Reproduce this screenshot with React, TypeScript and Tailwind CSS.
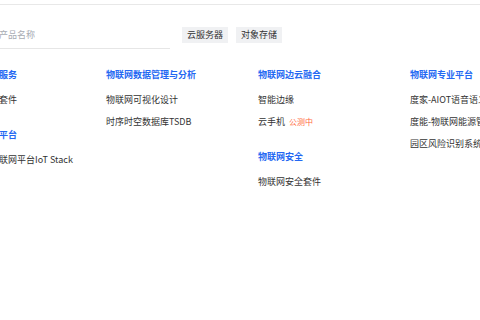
type Item = { label: string; tag?: string };
type Group = { title: string; items: Item[] };

const columns: Group[][] = [
  [
    { title: "物联网核心服务", items: [{ label: "物联网核心套件" }] },
    { title: "物联网基础平台", items: [{ label: "百度天工物联网平台IoT Stack" }] },
  ],
  [
    {
      title: "物联网数据管理与分析",
      items: [{ label: "物联网可视化设计" }, { label: "时序时空数据库TSDB" }],
    },
  ],
  [
    {
      title: "物联网边云融合",
      items: [{ label: "智能边缘" }, { label: "云手机", tag: "公测中" }],
    },
    { title: "物联网安全", items: [{ label: "物联网安全套件" }] },
  ],
  [
    {
      title: "物联网专业平台",
      items: [
        { label: "度家-AIOT语音语义平台" },
        { label: "度能-物联网能源管理" },
        { label: "园区风险识别系统" },
      ],
    },
  ],
];

const tags = ["云服务器", "对象存储"];

function ProductGroup({ group }: { group: Group }) {
  return (
    <div className="flex flex-col">
      <div className="mb-[9px] whitespace-nowrap text-[9px] font-semibold leading-[16px] text-[#2468f2]">
        {group.title}
      </div>
      {group.items.map((item) => (
        <div
          key={item.label}
          className="mb-[6px] flex items-center gap-[4px] whitespace-nowrap text-[9px] leading-[16px] text-[#333333]"
        >
          <span>{item.label}</span>
          {item.tag && <span className="text-[8px] text-[#ff6a3d]">{item.tag}</span>}
        </div>
      ))}
    </div>
  );
}

export default function App() {
  return (
    <div
      className="h-[320px] w-[480px] overflow-hidden bg-white pt-[4px]"
      style={{ fontFamily: '"Noto Sans CJK SC", "Noto Sans", sans-serif' }}
    >
      <div className="border-t border-[#e8e8e8]" />
      <div className="ml-[-46px] flex flex-col">
        <div className="mt-[16px] flex items-center">
          <div className="flex h-[28px] w-[216px] shrink-0 items-center border-b border-[#e6e6e6] pl-[18px]">
            <span className="whitespace-nowrap text-[9px] text-[#a8abb3]">请输入产品名称</span>
          </div>
          <div className="ml-[12px] flex gap-[8px]">
            {tags.map((t) => (
              <span
                key={t}
                className="flex h-[16px] items-center whitespace-nowrap bg-[#f0f1f3] px-[5px] text-[9px] text-[#333333]"
              >
                {t}
              </span>
            ))}
          </div>
        </div>
        <div className="mt-[18px] flex">
          {columns.map((col, i) => (
            <div key={i} className="flex w-[152px] shrink-0 flex-col gap-[13px]">
              {col.map((g) => (
                <ProductGroup key={g.title} group={g} />
              ))}
            </div>
          ))}
        </div>
      </div>
    </div>
  );
}
